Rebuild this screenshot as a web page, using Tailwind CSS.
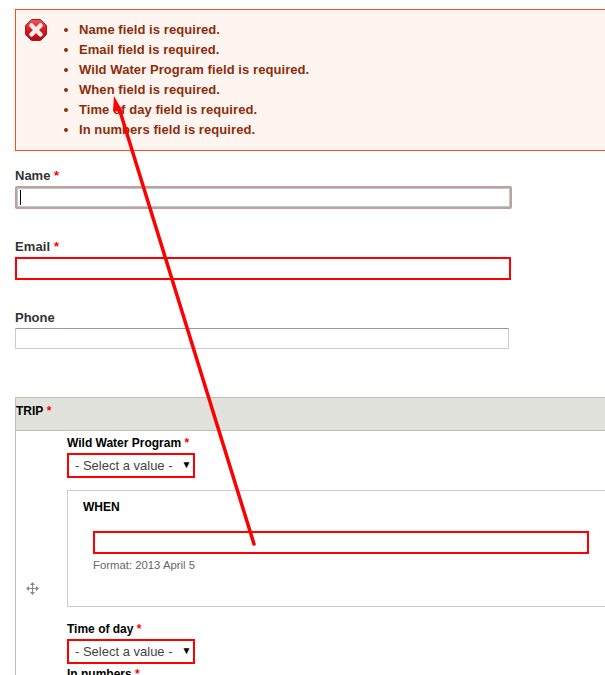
<!DOCTYPE html>
<html>
  <head>
    <meta charset="utf-8">
    <script src="https://cdn.jsdelivr.net/npm/@tailwindcss/browser@4"></script>
  </head>
  <body>
    <div class="relative h-[675px] w-[605px] overflow-hidden bg-white pl-[15px] pt-[9px] font-['Liberation_Sans',sans-serif] text-[13px] text-[#333]">
      <!-- error summary -->
      <div class="flex h-[142px] w-[640px] border border-[#ed541d] bg-[#fef5f1] pl-[9px] pt-[9px] font-bold tracking-[0.07px] text-[#8c2e0b]">
        <svg width="22" height="22" viewBox="0 0 22 22" class="shrink-0">
          <defs>
            <linearGradient id="stop-red" x1="0" y1="0" x2="0" y2="1">
              <stop offset="0" stop-color="#ee5a5f"/>
              <stop offset="0.5" stop-color="#d81820"/>
              <stop offset="1" stop-color="#b00c12"/>
            </linearGradient>
          </defs>
          <polygon points="6.5,0.5 15.5,0.5 21.5,6.5 21.5,15.5 15.5,21.5 6.5,21.5 0.5,15.5 0.5,6.5" fill="url(#stop-red)" stroke="#b0161a" stroke-width="1"/>
          <path d="M6.5 6.5 L15.5 15.5 M15.5 6.5 L6.5 15.5" stroke="#fdeeee" stroke-width="4.5" stroke-linecap="round"/>
        </svg>
        <ul class="ml-[32px] mt-[1px] list-disc pl-0 leading-[20px] marker:text-[#8c2e0b]">
          <li>Name field is required.</li>
          <li>Email field is required.</li>
          <li>Wild Water Program field is required.</li>
          <li>When field is required.</li>
          <li>Time of day field is required.</li>
          <li>In numbers field is required.</li>
        </ul>
      </div>

      <!-- contact fields -->
      <label class="mt-[17px] block font-bold leading-[15px]">Name <span class="text-[#f00]">*</span></label>
      <div class="mt-[3px] flex h-[23px] w-[497px] items-center rounded-[2px] border-2 border-[#c4a094] pl-[3px] shadow-[inset_0_0_0_1px_#b0cbe8]">
        <span class="h-[15px] w-px bg-black"></span>
      </div>

      <label class="mt-[30px] block font-bold leading-[15px] tracking-[0.1px]">Email <span class="text-[#f00]">*</span></label>
      <div class="mt-[3px] h-[23px] w-[496px] border-2 border-[#f00]"></div>

      <label class="mt-[30px] block font-bold leading-[15px]">Phone</label>
      <div class="mt-[3px] h-[21px] w-[494px] border border-[#ccc] border-t-[#999]"></div>

      <!-- trip table -->
      <div class="mt-[48px] w-[640px] border-l border-[#bebfb9]">
        <div class="flex h-[34px] items-center border-y border-[#bebfb9] bg-[#e1e2dc] pb-[6px] text-[12px] font-bold text-black">TRIP&nbsp;<span class="text-[#f00]">*</span></div>
        <div class="flex">
          <div class="w-[51px] shrink-0 pl-[10px] pt-[151px]">
            <svg width="13" height="13" viewBox="0 0 13 13" fill="#8a8a8a">
              <path d="M6 2h1v9H6z M2 6h9v1H2z"/>
              <path d="M6.5 0 L9 3 H4 Z M6.5 13 L4 10 H9 Z M0 6.5 L3 4 V9 Z M13 6.5 L10 9 V4 Z"/>
            </svg>
          </div>
          <div class="flex-1 text-[12px] text-black">
            <label class="mt-[5px] block font-bold leading-[15px]">Wild Water Program <span class="text-[#f00]">*</span></label>
            <div class="mt-[2px] flex h-[25px] w-[128px] items-center border-2 border-[#f00] pl-[6px] text-[13px] text-[#444]">- Select a value -<span class="ml-[9px] -mt-[2px] text-[10px] text-black">▼</span></div>
            <div class="mt-[12px] h-[117px] border border-[#ccc] pl-[15px] pt-[9px]">
              <div class="font-bold leading-[15px]">WHEN</div>
              <div class="ml-[10px] mt-[16px] h-[23px] w-[496px] border-2 border-[#f00]"></div>
              <div class="ml-[10px] mt-[4px] text-[11.33px] leading-[14px] text-[#666]">Format: 2013 April 5</div>
            </div>
            <label class="mt-[15px] block font-bold leading-[15px]">Time of day <span class="text-[#f00]">*</span></label>
            <div class="mt-[2px] flex h-[25px] w-[128px] items-center border-2 border-[#f00] pl-[6px] text-[13px] text-[#444]">- Select a value -<span class="ml-[9px] -mt-[2px] text-[10px] text-black">▼</span></div>
            <label class="mt-[3px] block font-bold leading-[15px]">In numbers <span class="text-[#f00]">*</span></label>
          </div>
        </div>
      </div>

      <!-- annotation arrow -->
      <svg class="pointer-events-none absolute left-0 top-0" width="605" height="675" viewBox="0 0 605 675">
        <line x1="254" y1="544" x2="119" y2="108" stroke="#f00" stroke-width="3.5" stroke-linecap="round"/>
        <polygon points="114,96 123,112 113,111" fill="#f00"/>
      </svg>
    </div>
  </body>
</html>
